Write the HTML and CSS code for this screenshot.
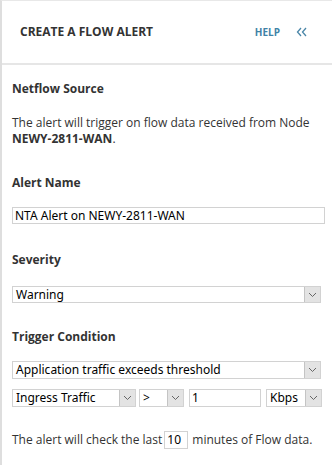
FILE: index.html
```html
<!DOCTYPE html>
<html>
<head>
<meta charset="utf-8">
<link rel="stylesheet" href="styles.css">
</head>
<body>
<div class="panel">
  <div class="header">
    <div class="title">CREATE A FLOW ALERT</div>
    <div class="actions">
      <span class="help">HELP</span>
      <svg class="collapse" width="11" height="10" viewBox="0 0 11 10"><path d="M5 1 L1.5 5 L5 9 M10 1 L6.5 5 L10 9" fill="none" stroke="#4a86a8" stroke-width="1.3"/></svg>
    </div>
  </div>
  <div class="content">
    <div class="label first">Netflow Source</div>
    <p class="desc">The alert will trigger on flow data received from Node <b>NEWY-2811-WAN</b>.</p>

    <div class="label">Alert Name</div>
    <div class="field text wide">NTA Alert on NEWY-2811-WAN</div>

    <div class="label sev">Severity</div>
    <div class="field select full"><span class="val">Warning</span><span class="arrow"><svg width="9" height="6" viewBox="0 0 9 6"><path d="M1 1 L4.5 4.5 L8 1" fill="none" stroke="#666" stroke-width="1"/></svg></span></div>

    <div class="label trig">Trigger Condition</div>
    <div class="field select full"><span class="val">Application traffic exceeds threshold</span><span class="arrow"><svg width="9" height="6" viewBox="0 0 9 6"><path d="M1 1 L4.5 4.5 L8 1" fill="none" stroke="#666" stroke-width="1"/></svg></span></div>
    <div class="row">
      <div class="field select ingress"><span class="val">Ingress Traffic</span><span class="arrow"><svg width="9" height="6" viewBox="0 0 9 6"><path d="M1 1 L4.5 4.5 L8 1" fill="none" stroke="#666" stroke-width="1"/></svg></span></div>
      <div class="field select op"><span class="val">&gt;</span><span class="arrow"><svg width="9" height="6" viewBox="0 0 9 6"><path d="M1 1 L4.5 4.5 L8 1" fill="none" stroke="#666" stroke-width="1"/></svg></span></div>
      <div class="field text num">1</div>
      <div class="field select unit"><span class="val">Kbps</span><span class="arrow"><svg width="9" height="6" viewBox="0 0 9 6"><path d="M1 1 L4.5 4.5 L8 1" fill="none" stroke="#666" stroke-width="1"/></svg></span></div>
    </div>
    <p class="footer">The alert will check the last <span class="field text mins">10</span> minutes of Flow data.</p>
  </div>
</div>
</body>
</html>
```
FILE: styles.css
```css
html, body {
  margin: 0;
  padding: 0;
  background: #fff;
}
.panel {
  width: 332px;
  height: 465px;
  box-sizing: border-box;
  border-left: 2px solid #dedede;
  border-top: 1px solid #e8e8e8;
  font-family: "Open Sans", sans-serif;
  color: #333;
}
.header {
  height: 62px;
  border-bottom: 2px solid #e6e6e6;
  display: flex;
  align-items: center;
  justify-content: space-between;
  padding: 0 25px 0 18px;
}
.title {
  font-weight: 700;
  font-size: 12px;
  color: #333;
  margin-top: -1px;
}
.actions {
  display: flex;
  align-items: center;
  gap: 16px;
}
.help {
  font-weight: 700;
  font-size: 10px;
  color: #3f82a6;
}
.collapse {
  display: block;
}
.content {
  padding: 16px 7px 0 10px;
}
.label {
  font-weight: 700;
  font-size: 12px;
  line-height: 16px;
  margin-top: 28px;
}
.label.first {
  margin-top: 0;
}
.desc {
  font-size: 12px;
  line-height: 16px;
  margin: 18px 0 0;
}
.desc b {
  font-weight: 700;
}
.field {
  box-sizing: border-box;
  height: 17px;
  border: 1px solid #d2d2d2;
  font-family: "Noto Sans", "Open Sans", sans-serif;
  font-size: 12px;
  line-height: 15px;
  color: #000;
  background: #fff;
}
.label + .field {
  margin-top: 16px;
}
.label.sev + .field {
  margin-top: 18px;
}
.text {
  padding-left: 2px;
}
.wide {
  width: 313px;
}
.select {
  display: flex;
  align-items: stretch;
}
.select .val {
  flex: 1;
  padding-left: 3px;
  white-space: nowrap;
  overflow: hidden;
}
.select .arrow {
  width: 15px;
  margin: 0;
  border-left: 1px solid #c4c4c4;
  background: #e3e3e3;
  display: flex;
  align-items: center;
  justify-content: center;
}
.full {
  width: 309px;
}
.label.trig {
  margin-top: 26px;
}
.label.trig + .field {
  margin-top: 16px;
  height: 18px;
}
.row {
  display: flex;
  margin-top: 10px;
  height: 18px;
}
.row .field {
  height: 18px;
}
.ingress {
  width: 124px;
}
.op {
  width: 45px;
  margin-left: 3px;
}
.num {
  width: 72px;
  margin-left: 5px;
}
.unit {
  width: 56px;
  margin-left: 5px;
}
.footer {
  font-size: 12px;
  line-height: 18px;
  margin: 24px 0 0;
  display: flex;
  align-items: center;
}
.mins {
  display: inline-block;
  width: 24px;
  height: 18px;
  margin: 0 4px 0 2px;
  line-height: 16px;
}
```
